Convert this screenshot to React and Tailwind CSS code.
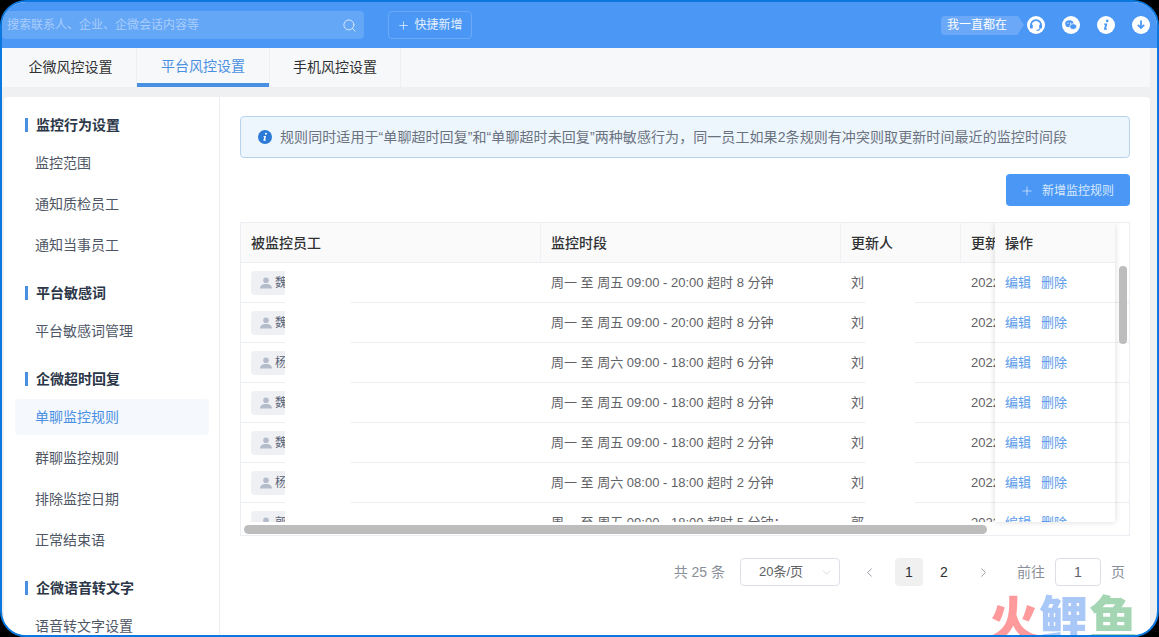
import { ChevronDown, ChevronLeft, ChevronRight, Plus, Search } from "lucide-react";

const menu = [
  { title: "监控行为设置", items: ["监控范围", "通知质检员工", "通知当事员工"] },
  { title: "平台敏感词", items: ["平台敏感词管理"] },
  { title: "企微超时回复", items: ["单聊监控规则", "群聊监控规则", "排除监控日期", "正常结束语"] },
  { title: "企微语音转文字", items: ["语音转文字设置"] },
];

const rows = [
  { name: "魏", time: "周一 至 周五 09:00 - 20:00 超时 8 分钟", by: "刘" },
  { name: "魏", time: "周一 至 周五 09:00 - 20:00 超时 8 分钟", by: "刘" },
  { name: "杨", time: "周一 至 周六 09:00 - 18:00 超时 6 分钟", by: "刘" },
  { name: "魏", time: "周一 至 周五 09:00 - 18:00 超时 8 分钟", by: "刘" },
  { name: "魏", time: "周一 至 周五 09:00 - 18:00 超时 2 分钟", by: "刘" },
  { name: "杨", time: "周一 至 周六 08:00 - 18:00 超时 2 分钟", by: "刘" },
  { name: "郭", time: "周一 至 周五 09:00 - 18:00 超时 5 分钟；", by: "郭" },
];

function HeadsetIcon() {
  return (
    <svg width="18" height="18" viewBox="0 0 18 18">
      <circle cx="9" cy="9" r="9" fill="#fff" />
      <path d="M4.2 10.500a5 5 0 1 1 9.600 0" fill="none" stroke="#4a97f5" strokeWidth="1.700" />
      <rect x="3" y="8.600" width="2.800" height="3.800" rx="1" fill="#4a97f5" />
      <rect x="12.200" y="8.600" width="2.800" height="3.800" rx="1" fill="#4a97f5" />
      <path d="M13.200 12.200a4 4 0 0 1-3.600 2.200" fill="none" stroke="#4a97f5" strokeWidth="1.200" />
    </svg>
  );
}

function WechatIcon() {
  return (
    <svg width="18" height="18" viewBox="0 0 18 18">
      <circle cx="9" cy="9" r="9" fill="#fff" />
      <ellipse cx="7.400" cy="7.800" rx="4.200" ry="3.500" fill="#4a97f5" />
      <ellipse cx="11.200" cy="10.600" rx="3.500" ry="2.900" fill="#4a97f5" stroke="#fff" strokeWidth="0.800" />
      <circle cx="6" cy="7.200" r="0.600" fill="#fff" />
      <circle cx="8.600" cy="7.200" r="0.600" fill="#fff" />
    </svg>
  );
}

function InfoGlyph({ bg, fg, size }) {
  return (
    <svg width={size} height={size} viewBox="0 0 18 18" className="shrink-0">
      <circle cx="9" cy="9" r="9" fill={bg} />
      <circle cx="10.200" cy="4.900" r="1.300" fill={fg} />
      <path d="M7.200 7.600h3.200l-1.300 5h1.200l-.3 1.200H6.800l1.300-5H6.900z" fill={fg} />
    </svg>
  );
}

function DownloadIcon() {
  return (
    <svg width="18" height="18" viewBox="0 0 18 18">
      <circle cx="9" cy="9" r="9" fill="#fff" />
      <path d="M9 4.600v7M5.800 8.800 9 12l3.200-3.200" fill="none" stroke="#4a97f5" strokeWidth="1.800" />
    </svg>
  );
}

function UserIcon() {
  return (
    <svg width="12" height="12" viewBox="0 0 12 12" className="shrink-0">
      <circle cx="6" cy="3.200" r="2.800" fill="#b4bccc" />
      <path d="M0 11.500c0-3 2.600-4.400 6-4.400s6 1.400 6 4.400z" fill="#b4bccc" />
    </svg>
  );
}

function Header() {
  return (
    <div className="h-[46px] shrink-0 bg-[#4a97f5] flex items-center">
      <div className="w-[362px] h-[28px] rounded bg-[#65a7f7] flex items-center justify-between pl-[5px] pr-[7px]">
        <span className="text-xs text-[#a9cdfb]">搜索联系人、企业、企微会话内容等</span>
        <Search size={15} strokeWidth={1.6} className="text-[#d5e6fd]" />
      </div>
      <div className="ml-6 w-[84px] h-[28px] rounded border border-[#6ba9f7] flex items-center justify-center gap-1 text-xs text-[#e6f0fe]">
        <Plus size={13} strokeWidth={1.4} />
        快捷新增
      </div>
      <div className="ml-auto mr-[7px] flex items-center">
        <div className="relative w-[77px] h-[19px] mr-[9px] rounded-l bg-[#6ba8f7] text-xs leading-[19px] text-white pl-[6px]">
          我一直都在
          <span className="absolute left-full top-0 border-y-[9.5px] border-l-[6px] border-y-transparent border-l-[#6ba8f7]" />
        </div>
        <div className="flex items-center gap-[17px]">
          <HeadsetIcon />
          <WechatIcon />
          <InfoGlyph bg="#fff" fg="#4a97f5" size={18} />
          <DownloadIcon />
        </div>
      </div>
    </div>
  );
}

function Tabs() {
  return (
    <div className="h-[39px] shrink-0 bg-[#f7f8fa] mr-[7px] flex pl-[3px] text-sm text-[#303133]">
      <div className="w-[132px] flex items-center justify-center pb-px border-r border-[#eeeff1]">企微风控设置</div>
      <div className="w-[132px] flex items-center justify-center pt-px border-b-4 border-[#4a90e2] text-[#4a90e2]">平台风控设置</div>
      <div className="w-[132px] flex items-center justify-center pb-px border-x border-[#eeeff1]">手机风控设置</div>
    </div>
  );
}

function Sidebar() {
  return (
    <div className="w-[216px] shrink-0 border-r border-[#e9ecf0] pt-[18px] pl-[11px] pr-[10px]">
      {menu.map((group, i) => (
        <div key={group.title} className={"flex flex-col " + (i > 0 ? "mt-5" : "")}>
          <div className="h-5 flex items-center text-sm font-semibold text-[#2b3648] mb-[5px]">
            <span className="w-[3px] h-[14px] bg-[#4a90e2] ml-[10px] mr-2" />
            {group.title}
          </div>
          {group.items.map((item) => (
            <div
              key={item}
              className={
                "h-9 shrink-0 mt-[5px] rounded px-5 flex items-center text-sm " +
                (item === "单聊监控规则" ? "bg-[#f5f8fc] text-[#4a90e2]" : "text-[#4f5766]")
              }
            >
              {item}
            </div>
          ))}
        </div>
      ))}
    </div>
  );
}

function Table() {
  return (
    <div className="relative mt-4 h-[314px] border border-[#ebeef2] overflow-hidden text-[13px] text-[#606266]">
      <div className="flex h-10 bg-[#fafafa] border-b border-[#ebeef2] text-sm font-medium text-[#303133] mr-[14px]">
        <div className="w-[300px] shrink-0 pl-[10px] flex items-center border-r border-[#f0f1f3]">被监控员工</div>
        <div className="w-[300px] shrink-0 pl-[10px] flex items-center border-r border-[#f0f1f3]">监控时段</div>
        <div className="w-[120px] shrink-0 pl-[10px] flex items-center border-r border-[#f0f1f3]">更新人</div>
        <div className="flex-1 pl-[10px] flex items-center">更新时间</div>
      </div>
      <div className="h-[259px] overflow-hidden">
        {rows.map((row, i) => (
          <div key={i} className="flex h-10 items-center border-b border-[#ebeef2]">
            <div className="w-[300px] shrink-0 pl-[10px]">
              <div className="w-[34px] h-6 rounded-l bg-[#eef0f4] flex items-center pl-[9px] gap-[3px] overflow-hidden text-xs text-[#5a6478]">
                <UserIcon />
                <span className="shrink-0">{row.name}</span>
              </div>
            </div>
            <div className="w-[300px] shrink-0 pl-[10px]">{row.time}</div>
            <div className="w-[120px] shrink-0 pl-[10px]">{row.by}</div>
            <div className="flex-1 pl-[10px]">2022-06-15 10:20:30</div>
          </div>
        ))}
      </div>

      {/* names are wiped out in the picture */}
      <div className="absolute left-[44px] top-[47px] w-[66px] h-[252px] bg-white" />
      <div className="absolute left-[624px] top-[47px] w-[50px] h-[252px] bg-white" />

      {/* fixed action column */}
      <div className="absolute left-[754px] top-0 w-[120px] h-[299px] bg-white shadow-[0_0_6px_rgba(0,0,0,0.15)]">
        <div className="h-10 bg-[#fafafa] border-b border-[#ebeef2] pl-[10px] flex items-center text-sm font-medium text-[#303133]">操作</div>
        <div className="h-[259px] overflow-hidden">
          {rows.map((row, i) => (
            <div key={i} className="h-10 border-b border-[#ebeef2] pl-[10px] flex items-center gap-[10px] text-[#5b9bea]">
              <span>编辑</span>
              <span>删除</span>
            </div>
          ))}
        </div>
      </div>

      {/* scrollbars */}
      <div className="absolute left-[878px] top-[43px] w-2 h-[78px] rounded bg-[#bdbdbd]" />
      <div className="absolute left-[3px] top-[302px] w-[743px] h-[9px] rounded-full bg-[#bdbdbd]" />
    </div>
  );
}

function Pager() {
  return (
    <div className="mt-[22px] h-7 flex items-center justify-end pr-[5px] text-[13px] text-[#8a8f99]">
      <span className="text-sm mr-[15px]">共 25 条</span>
      <div className="w-[100px] h-7 rounded-sm border border-[#dcdfe6] flex items-center justify-between pl-[18px] pr-[6px] text-[#606266]">
        20条/页
        <ChevronDown size={13} strokeWidth={1.2} className="text-[#c0c4cc]" />
      </div>
      <ChevronLeft size={15} strokeWidth={1.4} className="ml-[22px] mr-[18px]" />
      <div className="w-7 h-7 rounded-sm bg-[#f0f0f0] flex items-center justify-center text-sm text-[#303133]">1</div>
      <div className="w-[42px] text-center text-sm text-[#303133]">2</div>
      <ChevronRight size={15} strokeWidth={1.4} className="ml-[11px]" />
      <span className="ml-[26px] text-sm">前往</span>
      <div className="ml-[10px] w-[46px] h-7 rounded border border-[#dcdfe6] flex items-center justify-center text-sm text-[#606266]">1</div>
      <span className="ml-[10px] text-sm">页</span>
    </div>
  );
}

export default function App() {
  return (
    <div className="w-[1159px] h-[637px] bg-black overflow-hidden font-['Liberation_Sans','Noto_Sans_CJK_SC',sans-serif]">
      <div className="relative w-full h-full rounded-[26px] border-2 border-[#0b78e0] overflow-hidden bg-[#eff0f2] flex flex-col">
        <Header />
        <Tabs />
        <div className="flex-1 min-h-0 mt-[10px] ml-[2px] mr-[7px] bg-white rounded-t flex overflow-hidden">
          <Sidebar />
          <div className="flex-1 px-5 pt-[19px]">
            <div className="h-[42px] rounded border border-[#b7d4ee] bg-[#edf6fd] flex items-center pl-4 text-sm tracking-[0.08px] text-[#6b7280]">
              <span className="mr-[8px] ml-px">
                <InfoGlyph bg="#2a7ad6" fg="#fff" size={14} />
              </span>
              规则同时适用于“单聊超时回复”和“单聊超时未回复”两种敏感行为，同一员工如果2条规则有冲突则取更新时间最近的监控时间段
            </div>
            <div className="mt-4 flex justify-end">
              <div className="w-[124px] h-8 rounded bg-[#4a97f5] flex items-center justify-center gap-[8px] pt-[2px] pr-[2px] text-xs text-[#d9e9fd]">
                <Plus size={14} strokeWidth={1.3} />
                新增监控规则
              </div>
            </div>
            <Table />
            <Pager />
          </div>
        </div>
        <div className="absolute right-[19px] bottom-[-5px] flex gap-px text-[49px] leading-[49px] font-black font-['Noto_Sans_CJK_SC',sans-serif]">
          <span className="text-[#ff9a9c]">火</span>
          <span className="text-[#a9c7f7]">鲤</span>
          <span className="text-[#a5d6b3]">鱼</span>
        </div>
      </div>
    </div>
  );
}
